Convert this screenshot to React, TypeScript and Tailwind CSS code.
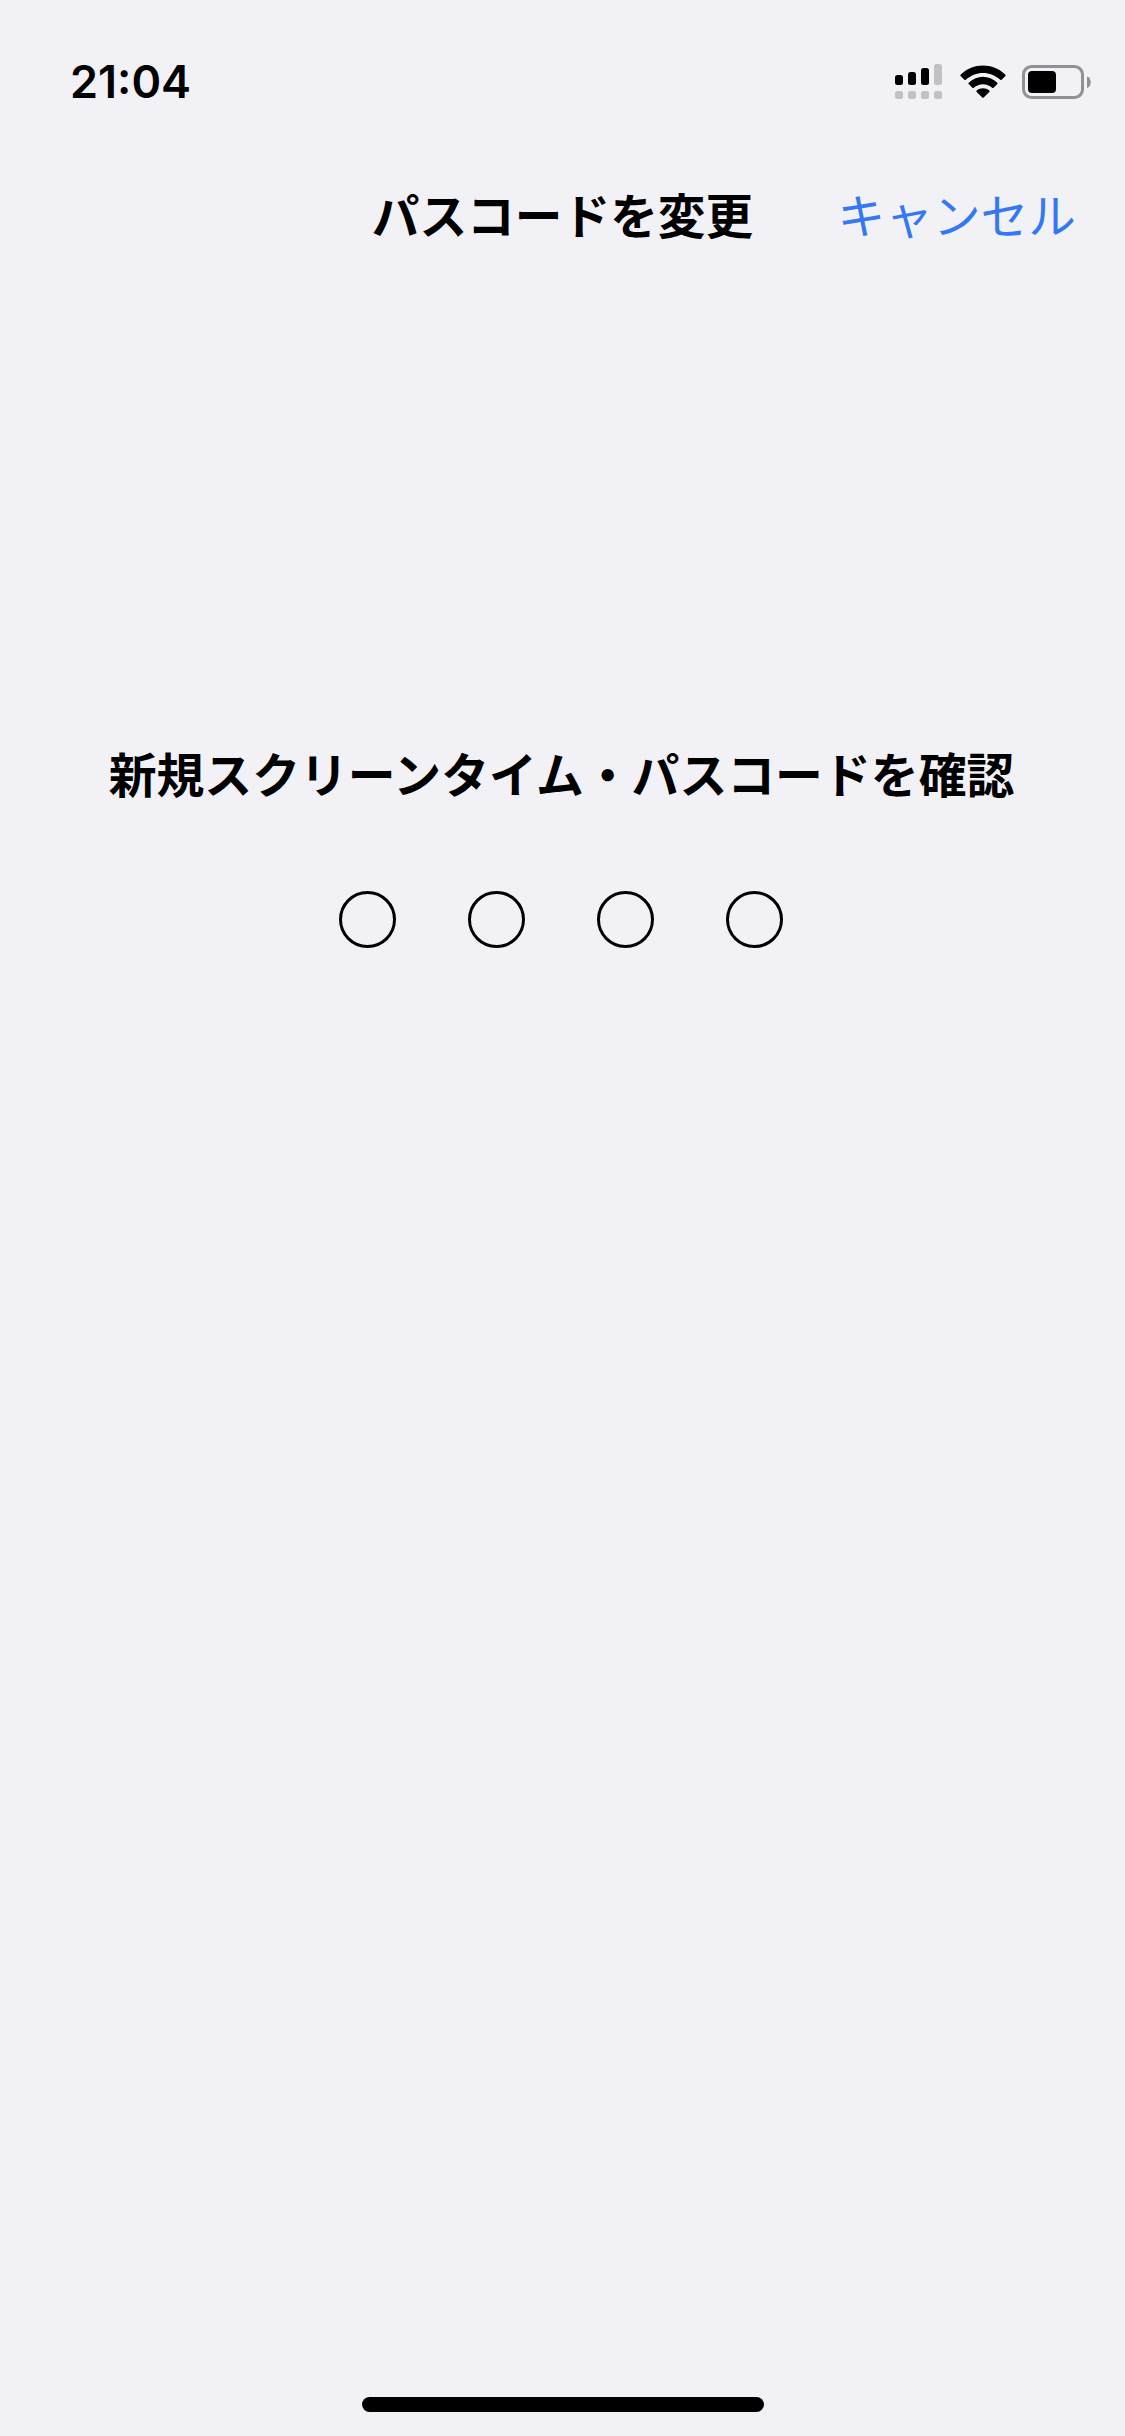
import React from "react";

const PASSCODE_LENGTH = 4;

const signalBars = [
  { x: 0, y: 11, height: 10, active: true },
  { x: 13, y: 8, height: 13, active: true },
  { x: 26, y: 4, height: 17, active: true },
  { x: 39, y: 0, height: 21, active: false },
];

const SignalIcon = () => (
  <svg width="47" height="35" viewBox="0 0 47 35">
    {signalBars.map((bar) => (
      <g key={bar.x}>
        <rect
          x={bar.x}
          y={bar.y}
          width="8"
          height={bar.height}
          rx="2.5"
          fill={bar.active ? "#000" : "#c1c0c5"}
        />
        <rect x={bar.x} y="27" width="8" height="8" rx="2.5" fill="#c1c0c5" />
      </g>
    ))}
  </svg>
);

const WifiIcon = () => (
  <svg width="46" height="34" viewBox="0 0 46 34">
    <path d="M0.8 9.6C13 -2.5 33 -2.5 45.2 9.6Q46 10.4 45.2 11.2L41.6 14.8Q41 15.4 40.3 14.8C30.5 5.6 15.5 5.6 5.7 14.8Q5 15.4 4.4 14.8L0.8 11.2Q0 10.4 0.8 9.6Z" />
    <path d="M8.7 17.7C16.8 9.7 29.2 9.7 37.3 17.7Q38 18.4 37.3 19.1L33.6 22.7Q32.9 23.3 32.2 22.7C27 18 19 18 13.8 22.7Q13.1 23.3 12.4 22.7L8.7 19.1Q8 18.4 8.7 17.7Z" />
    <path d="M16.7 25.6C20.4 22.6 25.6 22.6 29.3 25.6Q30 26.2 29.3 27L23.7 32.5Q23 33.2 22.3 32.5L16.7 27Q16 26.2 16.7 25.6Z" />
  </svg>
);

const BatteryIcon = () => (
  <svg width="69" height="34" viewBox="0 0 69 34">
    <rect
      x="1.5"
      y="1.5"
      width="59"
      height="31"
      rx="8"
      fill="none"
      stroke="#919094"
      strokeWidth="3"
    />
    <rect x="6" y="6" width="28" height="22" rx="4" />
    <path d="M65 11.5C70 13 70 21.5 65 23Z" fill="#919094" />
  </svg>
);

const StatusBar = () => (
  <div className="flex h-[165px] items-start justify-between pt-[64px] pr-[34px] pl-[70px]">
    <span className="mt-[1px] font-['Inter'] text-[45px] leading-[34px] font-semibold">
      21<span className="inline-block -translate-y-1">:</span>04
    </span>
    <div className="flex items-start">
      <SignalIcon />
      <div className="mt-px ml-[18px]">
        <WifiIcon />
      </div>
      <div className="mt-px ml-4">
        <BatteryIcon />
      </div>
    </div>
  </div>
);

const App: React.FC = () => {
  return (
    <div className="flex h-[2436px] w-[1125px] flex-col bg-[#f2f1f6] font-['Noto_Sans_CJK_JP',sans-serif] text-[47.7px] leading-[72px] text-black">
      <StatusBar />
      <header className="grid h-[98px] grid-cols-[1fr_auto_1fr] items-center px-[49px] whitespace-nowrap">
        <h1 className="col-start-2 font-bold">パスコードを変更</h1>
        <button className="justify-self-end text-[#3478f6]">キャンセル</button>
      </header>
      <main className="flex flex-1 flex-col items-center pt-[473px]">
        <h2 className="mr-[2px] text-[47.85px] font-bold whitespace-nowrap">
          新規スクリーンタイム・パスコードを確認
        </h2>
        <div className="mt-[83px] mr-[3px] flex gap-[72px]">
          {Array.from({ length: PASSCODE_LENGTH }).map((_, index) => (
            <span
              key={index}
              className="size-[57px] rounded-full border-3 border-black"
            />
          ))}
        </div>
      </main>
      <div className="mx-auto mb-6 h-[15px] w-[402px] rounded-full bg-black" />
    </div>
  );
};

export default App;
